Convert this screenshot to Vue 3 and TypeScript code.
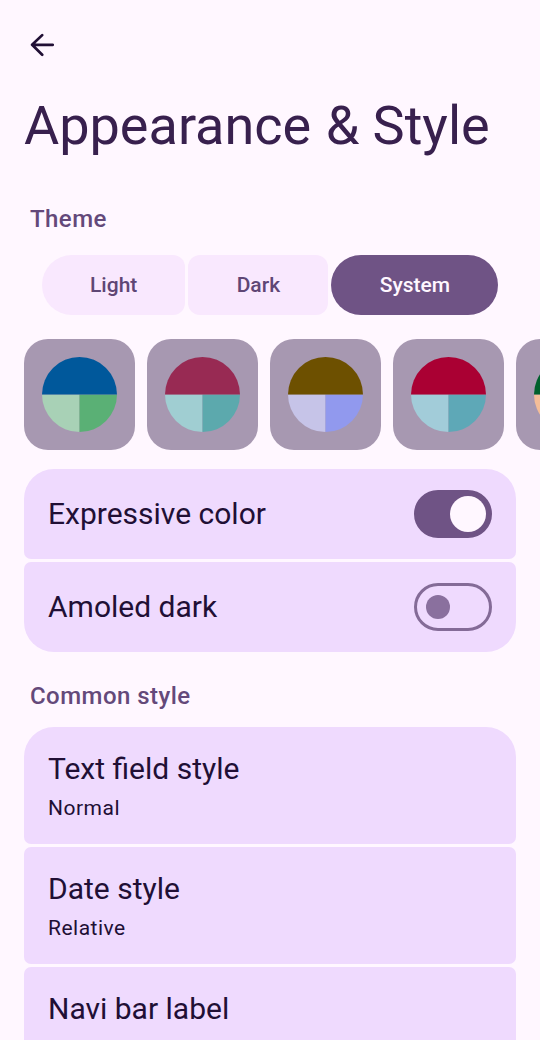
<script setup lang="ts">
import { ref } from 'vue'

interface Palette { top: string; left: string; right: string }

const modes = ['Light', 'Dark', 'System']
const activeMode = ref('System')

const palettes: Palette[] = [
  { top: '#00589b', left: '#a8d1b6', right: '#5ab075' },
  { top: '#982a53', left: '#a0ced2', right: '#5ca9ad' },
  { top: '#6d5000', left: '#c6c4e8', right: '#9199ee' },
  { top: '#aa0033', left: '#a2ccd9', right: '#5ea8b7' },
  { top: '#00602c', left: '#f4bd98', right: '#d69060' },
]

const toggles = ref([
  { label: 'Expressive color', on: true },
  { label: 'Amoled dark', on: false },
])

const options = [
  { label: 'Text field style', value: 'Normal' },
  { label: 'Date style', value: 'Relative' },
  { label: 'Navi bar label', value: 'Always' },
]
</script>

<template>
  <main class="screen">
    <button class="back" aria-label="Back">
      <svg width="24" height="24" viewBox="0 0 24 24">
        <path d="M22.7 11.8H2.2M12.2 2.1L2.1 11.8l10.1 9.9" />
      </svg>
    </button>
    <h1>Appearance <span class="amp">&amp;</span> Style</h1>

    <h2 class="theme-heading">Theme</h2>
    <div class="segments">
      <button
        v-for="mode in modes"
        :key="mode"
        class="segment"
        :class="[mode.toLowerCase(), { active: mode === activeMode }]"
        @click="activeMode = mode"
      >{{ mode }}</button>
    </div>

    <div class="palettes">
      <div v-for="(p, i) in palettes" :key="i" class="tile">
        <svg width="75" height="75" viewBox="0 0 75 75">
          <path d="M0 37.5A37.5 37.5 0 0 0 37.5 75V37.5Z" :fill="p.left" />
          <path d="M75 37.5A37.5 37.5 0 0 1 37.5 75V37.5Z" :fill="p.right" />
          <path d="M0 37.5A37.5 37.5 0 0 1 75 37.5Z" :fill="p.top" />
        </svg>
      </div>
    </div>

    <section class="group">
      <div v-for="t in toggles" :key="t.label" class="card toggle-row">
        <span class="label">{{ t.label }}</span>
        <button class="switch" :class="{ on: t.on }" role="switch" :aria-checked="t.on" :aria-label="t.label" @click="t.on = !t.on">
          <span class="knob"></span>
        </button>
      </div>
    </section>

    <h2 class="common-heading">Common style</h2>
    <section class="group">
      <div v-for="o in options" :key="o.label" class="card option-row">
        <span class="label">{{ o.label }}</span>
        <span class="value">{{ o.value }}</span>
      </div>
    </section>
  </main>
</template>

<style>
body {
  background: #fff7ff;
}
</style>

<style scoped>
.screen {
  box-sizing: border-box;
  width: 540px;
  height: 1040px;
  overflow: hidden;
  padding: 33px 24px 0;
  background: #fff7ff;
  color: #210f35;
  font-family: Roboto, sans-serif;
}
button {
  margin: 0;
  padding: 0;
  border: 0;
  background: none;
  font-family: inherit;
}
.back {
  display: block;
  width: 24px;
  height: 24px;
  margin-left: 6px;
}
.back svg {
  display: block;
}
.back path {
  fill: none;
  stroke: #210f35;
  stroke-width: 2.7;
  stroke-linecap: round;
  stroke-linejoin: round;
}
h1 {
  margin: 36px 0 0;
  color: #38204e;
  font-size: 54px;
  font-weight: 400;
  line-height: 66px;
  white-space: nowrap;
}
.amp {
  margin-left: 1px;
}
h2 {
  margin: 0 0 0 6px;
  color: #64497a;
  font-size: 24px;
  font-weight: 500;
  line-height: 36px;
  letter-spacing: 0.45px;
}
.theme-heading {
  margin-top: 42px;
}
.segments {
  display: flex;
  gap: 3px;
  margin: 18px 17px 0 18px;
}
.segment {
  flex: none;
  height: 60px;
  border-radius: 12px;
  background: #f9e8fe;
  color: #5f4675;
  font-size: 21px;
  font-weight: 500;
  letter-spacing: 0.02px;
}
.segment.light {
  width: 143.4px;
  border-radius: 30px 12px 12px 30px;
}
.segment.dark {
  width: 140px;
}
.segment.system {
  width: 167px;
  border-radius: 12px 30px 30px 12px;
}
.segment.active {
  border-radius: 30px;
  background: #6f5385;
  color: #fff7ff;
}
.palettes {
  display: flex;
  gap: 12px;
  margin: 24px -24px 0 0;
  overflow: hidden;
}
.tile {
  display: flex;
  flex: none;
  align-items: center;
  justify-content: center;
  width: 111px;
  height: 111px;
  border-radius: 24px;
  background: #a798b1;
}
.group {
  display: flex;
  flex-direction: column;
  gap: 3px;
}
.palettes + .group {
  margin-top: 19.4px;
}
.card {
  box-sizing: border-box;
  display: flex;
  padding: 0 24px;
  border-radius: 7px;
  background: #efdafe;
}
.card:first-child {
  border-top-left-radius: 30px;
  border-top-right-radius: 30px;
}
.toggle-row {
  align-items: center;
  justify-content: space-between;
  height: 90px;
}
.toggle-row:last-child {
  border-bottom-left-radius: 30px;
  border-bottom-right-radius: 30px;
}
.label {
  font-size: 30px;
  line-height: 36px;
}
.switch {
  box-sizing: border-box;
  display: flex;
  align-items: center;
  width: 78px;
  height: 48px;
  padding-left: 9px;
  border: 3px solid #846b97;
  border-radius: 24px;
}
.knob {
  width: 24px;
  height: 24px;
  border-radius: 50%;
  background: #8a709e;
}
.switch.on {
  padding-left: 33px;
  border-color: #6f5385;
  background: #6f5385;
}
.switch.on .knob {
  width: 36px;
  height: 36px;
  background: #fff7ff;
}
.common-heading {
  margin-top: 26px;
  margin-bottom: 13px;
}
.option-row {
  flex-direction: column;
  height: 117px;
  padding-top: 24px;
}
.value {
  margin-top: 6px;
  font-size: 21px;
  line-height: 30px;
  letter-spacing: 0.5px;
}
</style>
